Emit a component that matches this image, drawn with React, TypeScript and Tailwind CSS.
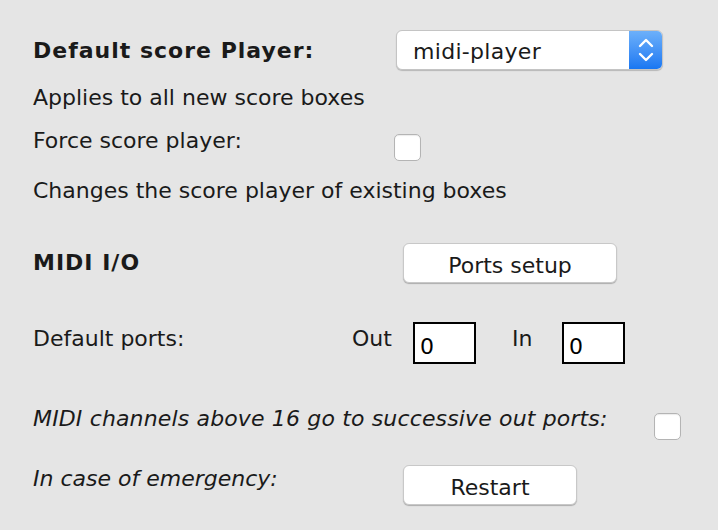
import React from 'react'

const font = { fontFamily: '"DejaVu Sans", Verdana, sans-serif' }

const Checkbox = ({ className = '' }: { className?: string }) => (
  <div
    className={`h-[27px] w-[27px] rounded-[5px] border border-[#b4b4b4] bg-white shadow-[inset_0_1px_1px_rgba(0,0,0,0.08)] ${className}`}
  />
)

const Button = ({ label, className = '' }: { label: string; className?: string }) => (
  <button
    className={`flex h-[40px] items-center justify-center rounded-[6px] border border-[#c8c8c8] bg-white pt-[5px] text-[22px] text-[#1a1a1a] shadow-[0_1px_1px_rgba(0,0,0,0.25)] ${className}`}
  >
    {label}
  </button>
)

const PortInput = ({ value }: { value: string }) => (
  <div className="flex h-[42px] w-[63px] items-end border-2 border-black bg-white pb-[1px] pl-[5px] text-[22px] leading-[28px] text-black">
    {value}
  </div>
)

export default function App() {
  return (
    <div
      className="h-[530px] w-[718px] overflow-hidden bg-[#e5e5e5] pl-[33px] pt-[30px] text-[22px] leading-[26px] text-[#1a1a1a]"
      style={font}
    >
      {/* score player */}
      <div className="flex h-[40px] items-center">
        <div className="mt-[2px] w-[363px] font-bold tracking-[1px]">Default score Player:</div>
        <div className="flex h-[40px] w-[267px] items-stretch overflow-hidden rounded-[6px] border border-[#c4c4c4] bg-white shadow-[0_1px_1px_rgba(0,0,0,0.2)]">
          <div className="flex flex-1 items-center pl-[16px] pt-[3px] tracking-[0.3px]">midi-player</div>
          <div className="flex w-[33px] items-center justify-center bg-gradient-to-b from-[#6cb0fa] to-[#1877f2]">
            <svg width="16" height="28" viewBox="0 0 16 28" fill="none" stroke="white" strokeWidth="2.4" strokeLinecap="round" strokeLinejoin="round">
              <path d="M2 10 L8 4 L14 10" />
              <path d="M2 18 L8 24 L14 18" />
            </svg>
          </div>
        </div>
      </div>

      <div className="flex h-[54px] items-center pt-[2px]">Applies to all new score boxes</div>

      <div className="flex h-[44px] items-start">
        <div className="mt-[4px] w-[361px]">Force score player:</div>
        <Checkbox className="mt-[10px]" />
      </div>

      <div className="flex h-[44px] items-start">
        <div className="mt-[10px]">Changes the score player of existing boxes</div>
      </div>

      {/* midi */}
      <div className="flex h-[78px] items-start">
        <div className="mt-[38px] w-[370px] font-bold tracking-[1px]">MIDI I/O</div>
        <Button label="Ports setup" className="mt-[31px] w-[214px]" />
      </div>

      <div className="flex h-[80px] items-start">
        <div className="mt-[36px] w-[319px]">Default ports:</div>
        <div className="mt-[36px] w-[61px]">Out</div>
        <div className="mt-[32px]">
          <PortInput value="0" />
        </div>
        <div className="ml-[36px] mt-[36px] w-[50px]">In</div>
        <div className="mt-[32px]">
          <PortInput value="0" />
        </div>
      </div>

      <div className="flex h-[80px] items-start">
        <div className="mt-[36px] w-[621px] italic tracking-[0.15px]">MIDI channels above 16 go to successive out ports:</div>
        <Checkbox className="mt-[43px]" />
      </div>

      <div className="flex items-start">
        <div className="mt-[16px] w-[370px] italic">In case of emergency:</div>
        <Button label="Restart" className="mt-[15px] w-[174px]" />
      </div>
    </div>
  )
}
